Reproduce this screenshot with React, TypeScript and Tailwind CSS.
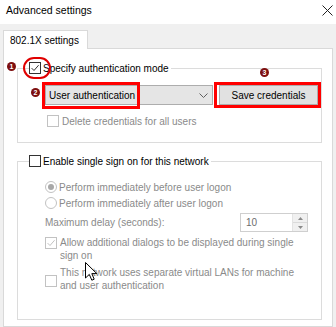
import React from "react";

function Check({ checked, disabled }: { checked?: boolean; disabled?: boolean }) {
  const color = disabled ? "#c2c2c2" : "#333333";
  return (
    <span
      className={`flex h-[12px] w-[12px] shrink-0 items-center justify-center border bg-white ${
        disabled ? "border-[#c2c2c2]" : "border-[#333333]"
      }`}
    >
      {checked && (
        <svg width="10" height="10" viewBox="0 0 10 10">
          <path d="M1.6 5.1 L4 7.5 L8.6 2.2" fill="none" stroke={color} strokeWidth="1" />
        </svg>
      )}
    </span>
  );
}

function Radio({ checked }: { checked?: boolean }) {
  return (
    <span className="flex h-[12px] w-[12px] shrink-0 items-center justify-center rounded-full border border-[#c2c2c2] bg-white">
      {checked && <span className="h-[6px] w-[6px] rounded-full bg-[#a8a8a8]" />}
    </span>
  );
}

function Marker({ label, className }: { label: string; className: string }) {
  return (
    <span
      className={`absolute flex h-[9px] w-[9px] items-center justify-center rounded-full bg-[#7d0f0f] text-[7px] font-bold leading-none text-white ${className}`}
    >
      {label}
    </span>
  );
}

export default function App() {
  return (
    <div className="relative flex h-[327px] w-[336px] flex-col overflow-hidden bg-[#f0f0f0] font-['Liberation_Sans',Arial,sans-serif] text-[10px] leading-[13px] text-black">
      {/* Title bar */}
      <div className="flex h-[24px] shrink-0 items-start justify-between bg-white pl-[6px] pr-[3px] pt-[4px]">
        <span className="text-[10.5px]">Advanced settings</span>
        <svg width="11" height="11" viewBox="0 0 11 11" className="mt-[1px]">
          <path d="M0.5 0.5 L10.5 10.5 M10.5 0.5 L0.5 10.5" stroke="#222" strokeWidth="1" />
        </svg>
      </div>

      <div className="flex flex-1 flex-col px-[3px] pt-[6px]">
        {/* Tab */}
        <div className="relative z-10 -mb-px flex h-[19px] w-[85px] items-center border border-b-0 border-[#d9d9d9] bg-white pl-[6px]">
          802.1X settings
        </div>

        {/* Tab panel */}
        <div className="flex-1 border border-[#d9d9d9] bg-white pl-[13px] pr-[10px] pt-[12px]">
          {/* Authentication group */}
          <fieldset className="border border-[#dcdcdc]">
            <legend className="ml-[11px] pr-[2px]">
              <span className="flex h-[14px] items-center gap-[2px]">
                <Check checked />
                <span>Specify authentication mode</span>
              </span>
            </legend>
            <div className="pb-[14px] pl-[27px] pr-[3px] pt-[10px]">
              <div className="flex gap-[6px]">
                <div className="flex h-[20px] w-[168px] items-center justify-between border border-[#adadad] bg-[#e5e5e5] pl-[3px] pr-[4px]">
                  <span>User authentication</span>
                  <svg width="9" height="5" viewBox="0 0 9 5">
                    <path d="M0.5 0.5 L4.5 4.5 L8.5 0.5" fill="none" stroke="#606060" strokeWidth="1" />
                  </svg>
                </div>
                <div className="flex h-[20px] flex-1 items-center justify-center border border-[#adadad] bg-[#e1e1e1]">
                  Save credentials
                </div>
              </div>
              <div className="mt-[9px] flex h-[14px] items-center gap-[3px] pl-[2px] text-[#8a8a8a]">
                <Check disabled />
                <span>Delete credentials for all users</span>
              </div>
            </div>
          </fieldset>

          {/* Single sign on group */}
          <fieldset className="mt-[11px] border border-[#dcdcdc]">
            <legend className="ml-[11px] pr-[2px]">
              <span className="flex h-[14px] items-center gap-[2px]">
                <Check />
                <span>Enable single sign on for this network</span>
              </span>
            </legend>
            <div className="pb-[27px] pl-[27px] pr-[13px] pt-[12px] text-[#8a8a8a]">
              <div className="flex h-[14px] items-center gap-[2px]">
                <Radio checked />
                <span>Perform immediately before user logon</span>
              </div>
              <div className="mt-[2px] flex h-[14px] items-center gap-[2px]">
                <Radio />
                <span>Perform immediately after user logon</span>
              </div>
              <div className="mt-[3px] flex h-[19px] items-center justify-between">
                <span>Maximum delay (seconds):</span>
                <div className="flex h-[19px] w-[68px] border border-[#cfcfcf]">
                  <span className="flex flex-1 items-center pl-[5px] text-[#6d6d6d]">10</span>
                  <div className="flex w-[15px] flex-col border-l border-[#e3e3e3] bg-[#f0f0f0]">
                    <span className="flex flex-1 items-center justify-center border-b border-[#dadada]">
                      <svg width="5" height="3" viewBox="0 0 5 3">
                        <path d="M0 3 L2.5 0 L5 3 Z" fill="#8a8a8a" />
                      </svg>
                    </span>
                    <span className="flex flex-1 items-center justify-center">
                      <svg width="5" height="3" viewBox="0 0 5 3">
                        <path d="M0 0 L2.5 3 L5 0 Z" fill="#8a8a8a" />
                      </svg>
                    </span>
                  </div>
                </div>
              </div>
              <div className="mt-[4px] flex items-start gap-[3px]">
                <span className="mt-[1px]">
                  <Check checked disabled />
                </span>
                <span>
                  Allow additional dialogs to be displayed during single
                  <br />
                  sign on
                </span>
              </div>
              <div className="mt-[4px] flex items-center gap-[3px]">
                <span className="mt-[3px]">
                  <Check disabled />
                </span>
                <span>
                  This network uses separate virtual LANs for machine
                  <br />
                  and user authentication
                </span>
              </div>
            </div>
          </fieldset>
        </div>
      </div>

      {/* Annotations */}
      <span className="absolute left-[23px] top-[57px] h-[22px] w-[28px] rounded-full border-2 border-[#e00000]" />
      <span className="absolute left-[42px] top-[82px] h-[27px] w-[98px] border-[3px] border-[#ff0000]" />
      <span className="absolute left-[214px] top-[82px] h-[26px] w-[107px] border-[3px] border-[#ff0000]" />
      <Marker label="1" className="left-[7px] top-[62px]" />
      <Marker label="2" className="left-[31px] top-[88px]" />
      <Marker label="3" className="left-[260px] top-[68px]" />

      {/* Mouse cursor */}
      <svg width="13" height="20" viewBox="0 0 13 20" className="absolute left-[85px] top-[262px]">
        <path
          d="M0.5 0.5 L0.5 16 L4.3 12.4 L6.8 18.2 L9.2 17.2 L6.8 11.6 L11.8 11.6 Z"
          fill="#ffffff"
          stroke="#000000"
          strokeWidth="1"
        />
      </svg>
    </div>
  );
}
